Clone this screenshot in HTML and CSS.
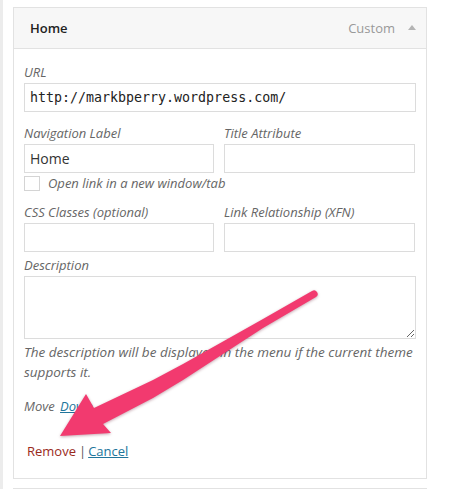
FILE: index.html
```html
<!DOCTYPE html>
<html>
<head>
<meta charset="utf-8">
<link rel="stylesheet" href="styles.css">
</head>
<body>
<div class="page">
  <div class="menu-item">
    <div class="item-bar">
      <span class="item-title">Home</span>
      <span class="item-controls">
        <span class="item-type">Custom</span>
        <span class="item-toggle"></span>
      </span>
    </div>
    <div class="item-settings">
      <div class="field">
        <label class="field-label">URL</label>
        <input class="text code" type="text" value="http://markbperry.wordpress.com/">
      </div>
      <div class="row row-nav">
        <div class="field">
          <label class="field-label">Navigation Label</label>
          <input class="text" type="text" value="Home">
        </div>
        <div class="field">
          <label class="field-label">Title Attribute</label>
          <input class="text" type="text" value="">
        </div>
      </div>
      <label class="check-row"><input class="check" type="checkbox">Open link in a new window/tab</label>
      <div class="row row-css">
        <div class="field">
          <label class="field-label">CSS Classes (optional)</label>
          <input class="text" type="text" value="">
        </div>
        <div class="field">
          <label class="field-label">Link Relationship (XFN)</label>
          <input class="text" type="text" value="">
        </div>
      </div>
      <div class="field field-desc">
        <label class="field-label">Description</label>
        <textarea class="desc"></textarea>
        <p class="help">The description will be displayed in the menu if the current theme supports it.</p>
      </div>
      <p class="move">Move <a class="link" href="#">Down</a></p>
      <p class="actions"><a class="remove" href="#">Remove</a><span class="sep">|</span><a class="link" href="#">Cancel</a></p>
    </div>
  </div>
  <div class="menu-item next"><div class="item-bar"></div></div>
  <svg class="arrow" width="461" height="489" viewBox="0 0 461 489">
    <path class="arrow-shape" d="M309 291 L260 319 L180 364 L150 380 L91 408 L83 394 L57 436 L108 433 L100 424 L150 398 L180 380 L260 328 L313 297 A3.3 3.3 0 0 0 309 291 Z"/>
  </svg>
</div>
</body>
</html>
```

FILE: styles.css
```css
html, body {
  margin: 0;
  padding: 0;
  background: #fff;
}

.page {
  position: relative;
  width: 461px;
  height: 489px;
  overflow: hidden;
  box-sizing: border-box;
  border-left: 3px solid #ececec;
  padding: 7px 34px 0 10px;
  font-family: "Open Sans", "Liberation Sans", sans-serif;
  font-size: 13px;
  color: #333;
}

.menu-item {
  width: 414px;
  box-sizing: border-box;
  border: 1px solid #e2e2e2;
  background: #fff;
}

.menu-item.next {
  margin-top: 9px;
}

.item-bar {
  display: flex;
  justify-content: space-between;
  align-items: center;
  height: 40px;
  background: #f7f7f7;
  border-bottom: 1px solid #e2e2e2;
  padding: 0 10px 0 16px;
}

.item-title {
  font-weight: 600;
  color: #222;
}

.item-controls {
  display: flex;
  align-items: center;
  gap: 13px;
}

.item-type {
  color: #999;
}

.item-toggle {
  width: 0;
  height: 0;
  border-left: 4px solid transparent;
  border-right: 4px solid transparent;
  border-bottom: 5px solid #b4b4b4;
  margin-bottom: 1px;
}

.item-settings {
  padding: 14px 10px 17px 10px;
}

.field {
  display: flex;
  flex-direction: column;
}

.field-label {
  font-style: italic;
  color: #666;
  line-height: 18px;
  margin-bottom: 2px;
}

.text {
  box-sizing: border-box;
  height: 29px;
  margin: 0;
  border: 1px solid #dcdcdc;
  background: #fff;
  padding: 0 5px;
  font-family: "Open Sans", "Liberation Sans", sans-serif;
  font-size: 14px;
  color: #333;
  outline: none;
}

.text.code {
  font-family: "DejaVu Sans Mono", "Liberation Mono", monospace;
  font-size: 13.3px;
  color: #222;
}

.row {
  display: grid;
  grid-template-columns: 190px 191px;
  column-gap: 10px;
  margin-top: 12px;
}

.check-row {
  display: flex;
  align-items: center;
  height: 16px;
  margin-top: 2px;
  font-style: italic;
  color: #666;
  line-height: 16px;
}

.check {
  appearance: none;
  -webkit-appearance: none;
  box-sizing: border-box;
  width: 16px;
  height: 15px;
  margin: 0 8px 0 0;
  border: 1px solid #d4d4d4;
  background: #fff;
}

.field-desc {
  margin-top: 4px;
}

.desc {
  box-sizing: border-box;
  height: 63px;
  margin: 0;
  border: 1px solid #dcdcdc;
  padding: 4px;
  resize: vertical;
  font-family: "Open Sans", "Liberation Sans", sans-serif;
  font-size: 14px;
  outline: none;
}

.help {
  margin: 3px 0 0 0;
  font-size: 13.5px;
  font-style: italic;
  color: #666;
  line-height: 20px;
}

.move {
  margin: 14px 0 0 0;
  font-style: italic;
  color: #666;
  line-height: 20px;
}

.link {
  color: #21759b;
  text-decoration: underline;
}

.move .link {
  margin-left: 2px;
}

.actions {
  margin: 25px 0 0 0;
  line-height: 20px;
  padding-left: 3px;
}

.remove {
  color: #9a2a1c;
  text-decoration: none;
}

.sep {
  color: #555;
  margin: 0 2px 0 3px;
}

.arrow {
  position: absolute;
  left: 0;
  top: 0;
  pointer-events: none;
}

.arrow-shape {
  fill: #f23a6f;
  filter: drop-shadow(0 1px 1.5px rgba(90, 0, 30, 0.35));
}
```
